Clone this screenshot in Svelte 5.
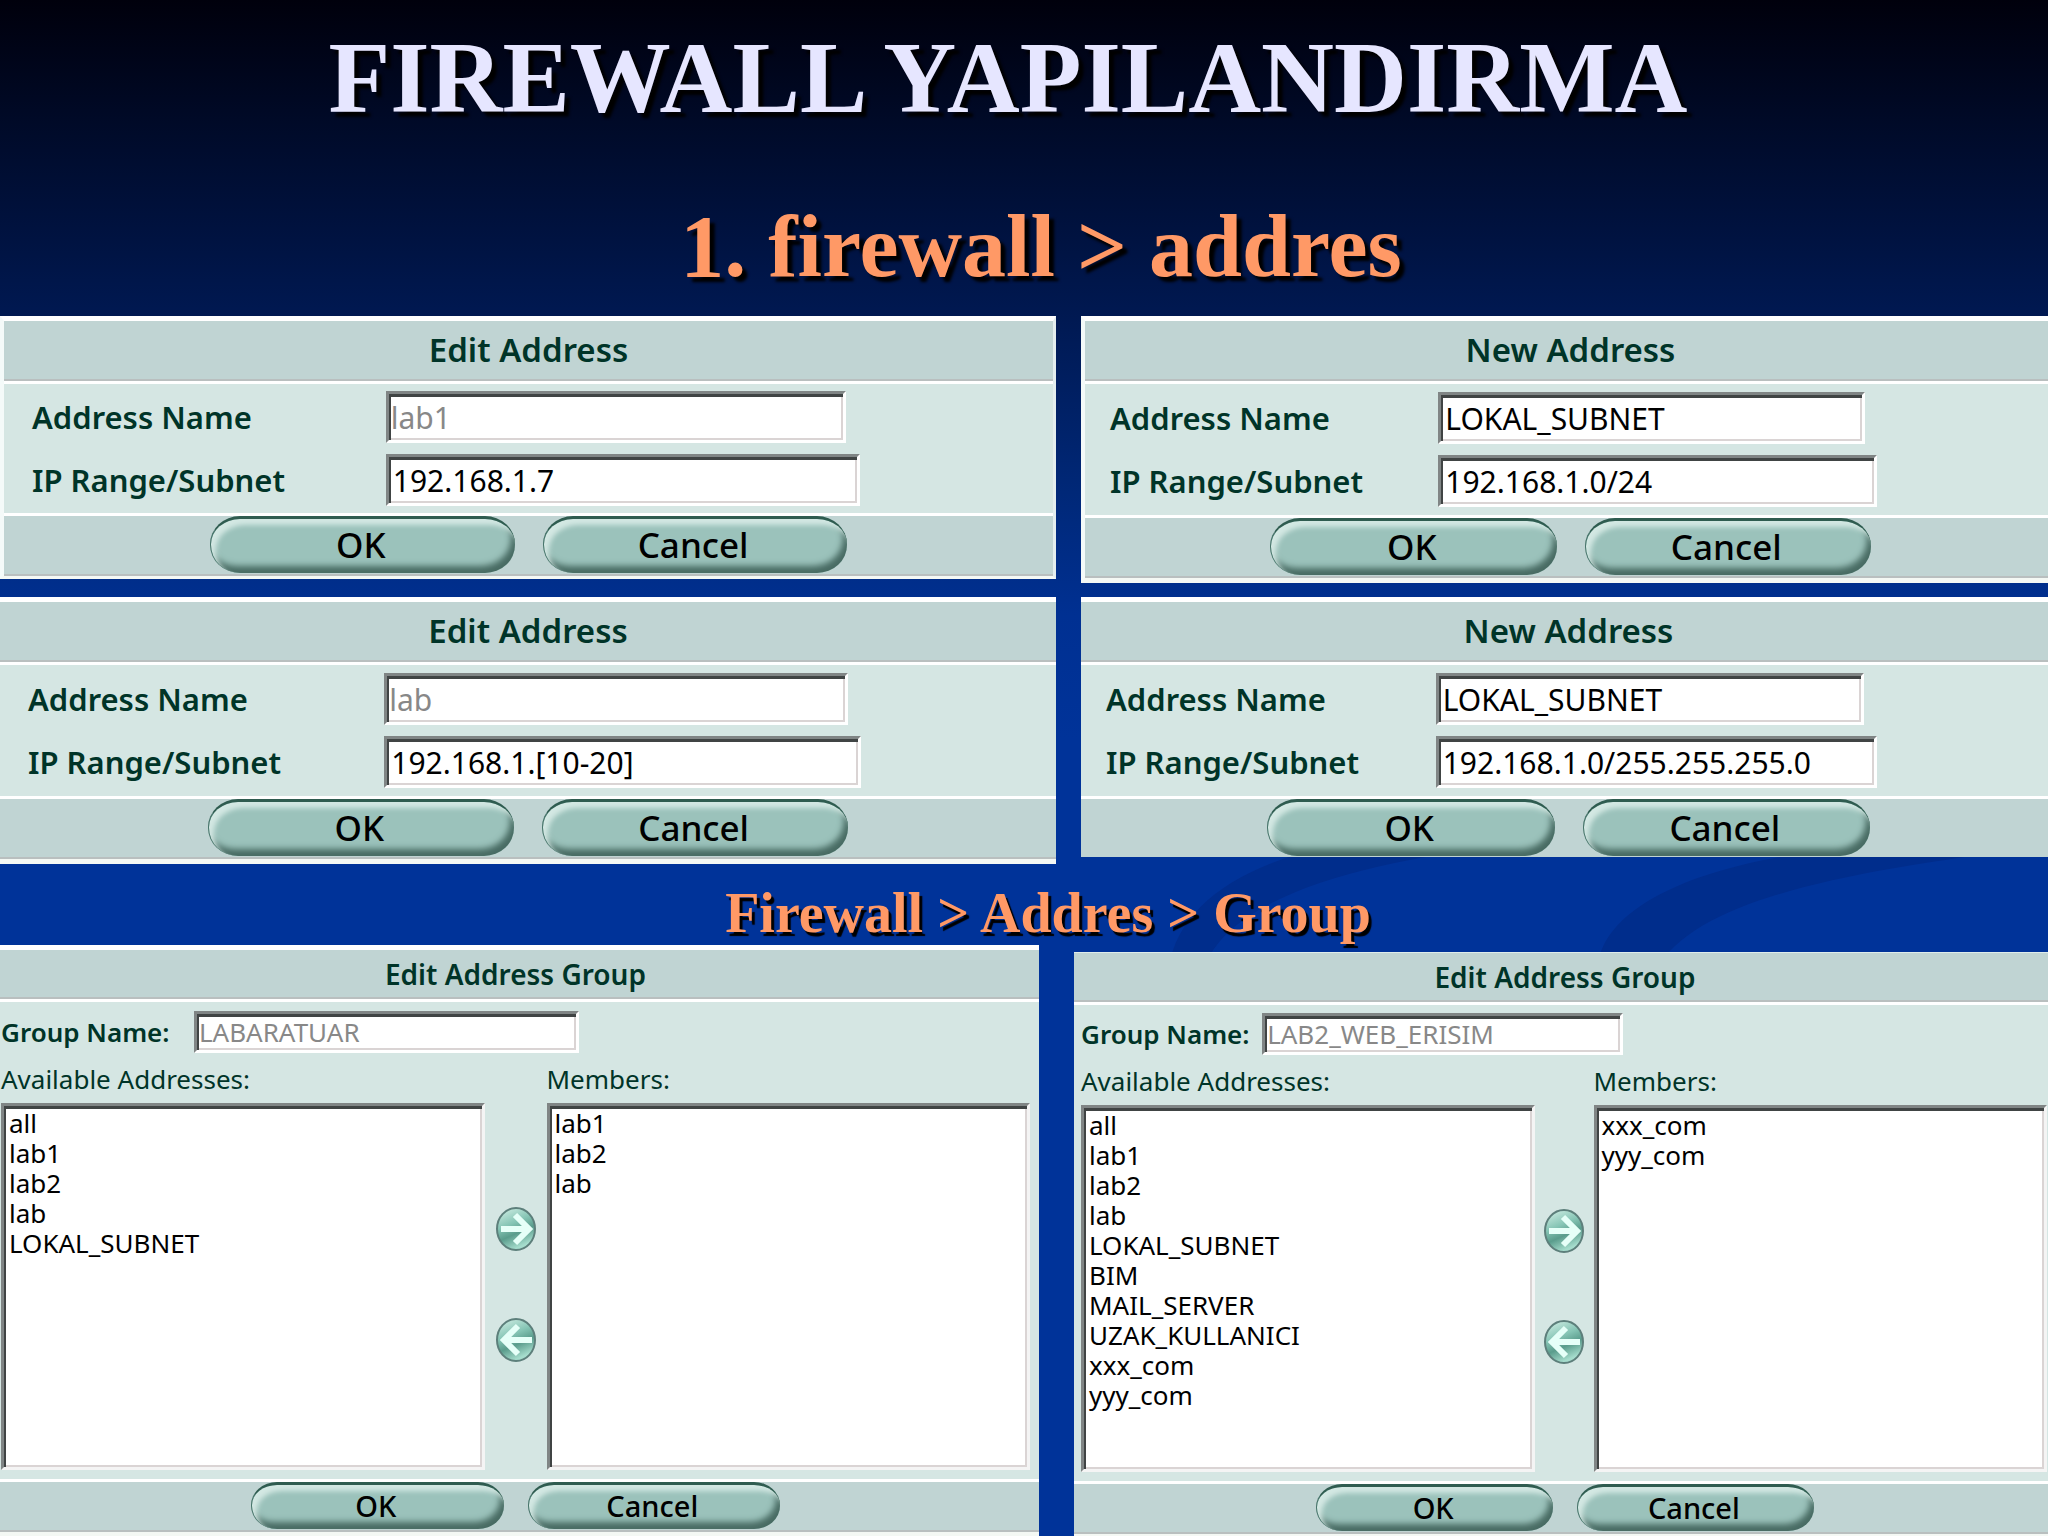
<script>
	const addressForms = [
		{ id: 'edit1', title: 'Edit Address', name: 'lab1', locked: true, range: '192.168.1.7', frame: 'edit boxed' },
		{ id: 'new1', title: 'New Address', name: 'LOKAL_SUBNET', locked: false, range: '192.168.1.0/24', frame: 'new boxed' },
		{ id: 'edit2', title: 'Edit Address', name: 'lab', locked: true, range: '192.168.1.[10-20]', frame: 'edit' },
		{ id: 'new2', title: 'New Address', name: 'LOKAL_SUBNET', locked: false, range: '192.168.1.0/255.255.255.0', frame: 'new cut' }
	];

	const groupForms = [
		{
			id: 'group1',
			name: 'LABARATUAR',
			available: ['all', 'lab1', 'lab2', 'lab', 'LOKAL_SUBNET'],
			members: ['lab1', 'lab2', 'lab'],
			side: 'left'
		},
		{
			id: 'group2',
			name: 'LAB2_WEB_ERISIM',
			available: ['all', 'lab1', 'lab2', 'lab', 'LOKAL_SUBNET', 'BIM', 'MAIL_SERVER', 'UZAK_KULLANICI', 'xxx_com', 'yyy_com'],
			members: ['xxx_com', 'yyy_com'],
			side: 'right'
		}
	];
</script>

{#snippet actions()}
	<footer class="actions">
		<button class="pill" type="submit">OK</button>
		<button class="pill" type="button">Cancel</button>
	</footer>
{/snippet}

{#snippet arrow(label, path)}
	<button class="move" type="button" aria-label={label}>
		<svg viewBox="0 0 42 46">
			<defs>
				<linearGradient id="ball" x1="0" y1="0" x2="0.4" y2="1">
					<stop offset="0" stop-color="#d9f3ea" />
					<stop offset="0.45" stop-color="#86c5b5" />
					<stop offset="0.7" stop-color="#5a9c8c" />
					<stop offset="1" stop-color="#a5dccc" />
				</linearGradient>
			</defs>
			<ellipse cx="21" cy="23" rx="19" ry="21" fill="url(#ball)" stroke="#5d7f7b" stroke-width="2" />
			<path d={path} fill="none" stroke="#e6fff8" stroke-width="6" />
		</svg>
	</button>
{/snippet}

<main class="slide">
	<svg class="swoosh" viewBox="0 0 1000 120" aria-hidden="true">
		<path d="M141 120 C150 60 208 20 298 0 L478 0 C338 12 198 50 176 120 Z" />
		<path d="M560 120 C564 60 658 12 828 0 L1000 0 C808 24 658 50 618 120 Z" />
	</svg>

	<h1>FIREWALL YAPILANDIRMA</h1>
	<h2>1. firewall &gt; addres</h2>

	<div class="forms">
		{#each addressForms as form}
			<form class="panel {form.frame}" onsubmit={(e) => e.preventDefault()}>
				<h3 class="bar">{form.title}</h3>
				<div class="fields">
					<label for="{form.id}-name">Address Name</label>
					<input id="{form.id}-name" class="short" type="text" value={form.name} disabled={form.locked} />
					<label for="{form.id}-range">IP Range/Subnet</label>
					<input id="{form.id}-range" type="text" value={form.range} />
				</div>
				{@render actions()}
			</form>
		{/each}
	</div>

	<h2 class="small">Firewall &gt; Addres &gt; Group</h2>

	<div class="groups">
		{#each groupForms as group}
			<form class="panel group {group.side}" onsubmit={(e) => e.preventDefault()}>
				<h3 class="bar">Edit Address Group</h3>
				<div class="body">
					<div class="name">
						<label for="{group.id}-name">Group Name:</label>
						<input id="{group.id}-name" type="text" value={group.name} disabled />
					</div>
					<div class="lists">
						<div class="list">
							<label for="{group.id}-available">Available Addresses:</label>
							<select id="{group.id}-available" multiple>
								{#each group.available as item}
									<option>{item}</option>
								{/each}
							</select>
						</div>
						<div class="moves">
							{@render arrow('Add', 'M6 23 H33 M20 9 L34 23 L20 37')}
							{@render arrow('Remove', 'M37 23 H10 M23 9 L9 23 L23 37')}
						</div>
						<div class="list">
							<label for="{group.id}-members">Members:</label>
							<select id="{group.id}-members" multiple>
								{#each group.members as item}
									<option>{item}</option>
								{/each}
							</select>
						</div>
					</div>
				</div>
				{@render actions()}
			</form>
		{/each}
	</div>
</main>

<style>
	:global(body) {
		margin: 0;
		background: #003399;
	}

	.slide {
		position: relative;
		min-height: 100vh;
		overflow: hidden;
		background: linear-gradient(#00000c 0%, #000a28 8%, #001850 20%, #002878 32%, #003092 40%, #003399 48%);
		font-family: "Noto Sans", sans-serif;
		color: #003428;
	}

	.swoosh {
		position: absolute;
		top: 846px;
		right: 0;
		width: 50%;
		fill: #002d8c;
	}

	h1, h2 {
		position: relative;
		margin: 0;
		text-align: center;
		font-family: "Liberation Serif", serif;
		font-weight: bold;
	}

	h1 {
		padding: 18px 32px 0 0;
		font-size: 101px;
		line-height: 120px;
		color: #e6e6ff;
		text-shadow: 5px 5px 3px #000;
	}

	h2 {
		padding: 49px 0 9px 34px;
		font-size: 88px;
		line-height: 120px;
		color: #ff9966;
		text-shadow: 5px 5px 3px #000;
	}

	h2.small {
		padding: 17px 0 0 48px;
		font-size: 56px;
		line-height: 64px;
		text-shadow: 3px 4px 1px #000;
	}

	.forms, .groups {
		position: relative;
		display: grid;
		align-items: start;
	}

	.forms {
		grid-template-columns: 1056fr 967fr;
		gap: 14px 25px;
	}

	.groups {
		grid-template-columns: 1039fr 974fr;
		gap: 35px;
	}

	.panel {
		display: flex;
		flex-direction: column;
		box-sizing: border-box;
		border-top: 5px solid #fff;
		border-bottom: 5px solid #f4f8f4;
		background: #d5e6e3;
	}

	.boxed {
		border-left: 4px solid #f4faf9;
	}

	.edit.boxed {
		border-right: 3px solid #e4eeee;
		border-bottom-width: 3px;
	}

	.cut {
		border-bottom: 0;
	}

	.bar {
		margin: 0;
		border-bottom: 2px solid #b9bfbf;
		background: #c0d4d3;
		text-align: center;
		font-size: 33px;
		line-height: 58px;
		font-weight: 600;
	}

	.new .bar, .new .actions, .right .bar, .right .actions {
		padding-left: 8px;
	}

	.left .bar, .left .actions {
		padding-right: 8px;
	}

	.fields {
		display: grid;
		grid-template-columns: 35fr 66fr;
		gap: 11px 0;
		align-items: center;
		padding: 8px 0 8px 28px;
		border-top: 3px solid #fff;
		border-bottom: 3px solid #fff;
	}

	.new .fields {
		grid-template-columns: 35fr 65fr;
		padding-left: 25px;
	}

	.edit.boxed .fields {
		padding: 7px 0;
		padding-left: 28px;
	}

	label {
		font-size: 31px;
		font-weight: 600;
	}

	input {
		box-sizing: border-box;
		width: 71%;
		height: 52px;
		padding: 0 4px;
		border: 3px solid;
		border-color: #808585 #fff #fff #808585;
		border-radius: 0;
		background: #fff;
		box-shadow: inset 2px 3px 0 #404444, inset -2px -2px 0 #dad4d4;
		font-family: "Noto Sans", sans-serif;
		font-size: 30px;
		color: #000;
	}

	input.short {
		width: 69%;
	}

	.new input {
		width: 72%;
	}

	.new input.short {
		width: 70%;
	}

	input:disabled {
		padding: 0 2px;
		color: #888;
	}

	.actions {
		display: flex;
		justify-content: center;
		gap: 28px;
		padding-bottom: 1px;
		border-bottom: 2px solid #b9bfbf;
		background: #c0d4d3;
	}

	.cut .actions {
		border-bottom: 0;
	}

	.pill {
		width: 29%;
		height: 57px;
		padding: 0 4px 0 0;
		border: 0;
		border-top: 3px solid #2f5c50;
		border-left: 1px solid #47746a;
		border-radius: 30px / 28px;
		background: #9bc2bb;
		box-shadow: inset 5px 6px 5px #d3e8e3, inset -4px -7px 6px #486b63;
		font-family: "Noto Sans", sans-serif;
		font-size: 35px;
		font-weight: 500;
		line-height: 48px;
		padding-bottom: 3px;
		color: #000;
	}

	.new .pill {
		width: 30%;
	}

	.group .bar {
		padding-top: 1px;
		font-size: 28px;
		line-height: 46px;
	}

	.group.right {
		margin-top: 7px;
		border-top: 1px solid #dfeceb;
	}

	.body {
		padding: 9px 9px 9px 1px;
		border-top: 3px solid #fff;
		border-bottom: 3px solid #fff;
	}

	.right .body {
		padding: 8px 1px 9px 7px;
	}

	.name {
		display: grid;
		grid-template-columns: 3fr 13fr;
		align-items: center;
	}

	.name label {
		font-size: 26px;
	}

	.name input {
		width: 46%;
		height: 42px;
		font-size: 26px;
	}

	.lists {
		display: flex;
		padding-top: 4px;
	}

	.list {
		display: flex;
		flex: 1;
		flex-direction: column;
		gap: 2px;
	}

	.list label {
		font-size: 26px;
		line-height: 44px;
		font-weight: 400;
	}

	select {
		box-sizing: border-box;
		width: 100%;
		height: 367px;
		padding: 2px 0;
		overflow: hidden;
		border: 3px solid;
		border-color: #808585 #f4f4f4 #f4f4f4 #808585;
		border-radius: 0;
		background: #fff;
		box-shadow: inset 2px 3px 0 #404444, inset -2px -2px 0 #dad4d4;
		font-family: "Noto Sans", sans-serif;
		font-size: 26px;
		color: #000;
	}

	option {
		display: flex;
		align-items: center;
		height: 30px;
		min-height: 30px;
		padding: 0 5px;
		line-height: 30px;
		box-sizing: border-box;
	}

	.moves {
		display: flex;
		flex-direction: column;
		gap: 65px;
		width: 62px;
		align-items: center;
		padding-top: 149px;
	}

	.right .moves {
		width: 59px;
	}

	.move {
		width: 42px;
		height: 46px;
		padding: 0;
		border: 0;
		background: none;
	}

	.move svg {
		display: block;
	}

	.group .actions {
		gap: 24px;
	}

	.group .pill {
		width: 24.5%;
		height: 47px;
		font-size: 29px;
		line-height: 38px;
		border-radius: 26px / 23px;
	}
</style>
